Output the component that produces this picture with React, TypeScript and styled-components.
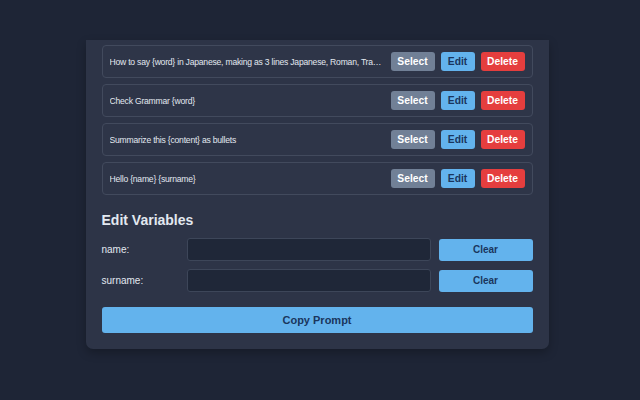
import React, { useState } from 'react';
import styled, { createGlobalStyle } from 'styled-components';

const GlobalStyle = createGlobalStyle`
  html, body {
    margin: 0;
    padding: 0;
    background: #1e2536;
    font-family: "Liberation Sans", Arial, sans-serif;
    color: #e2e8f0;
  }
`;

const Page = styled.div`
  width: 640px;
  height: 400px;
  overflow: hidden;
  display: flex;
  justify-content: center;
  align-items: flex-start;
  padding-top: 40px;
  box-sizing: border-box;
`;

const Card = styled.div`
  width: 463px;
  margin-left: -6px;
  box-sizing: border-box;
  background: #2d3447;
  border-radius: 0 0 7px 7px;
  box-shadow: 0 4px 10px rgba(0, 0, 0, 0.25);
  padding: 5px 16px 16px;
`;

const PromptList = styled.div`
  display: flex;
  flex-direction: column;
  gap: 6px;
`;

const PromptRow = styled.div`
  display: flex;
  align-items: center;
  gap: 6px;
  height: 33px;
  box-sizing: border-box;
  padding: 0 7px 0 7px;
  border: 1px solid #424a5d;
  border-radius: 4px;
  background: #2e3548;
`;

const PromptText = styled.span`
  flex: 1;
  min-width: 0;
  font-size: 8.6px;
  letter-spacing: -0.22px;
  color: #e2e8f0;
  white-space: nowrap;
  overflow: hidden;
  text-overflow: ellipsis;
`;

const tones = {
  gray: { bg: '#718096', fg: '#ffffff' },
  blue: { bg: '#63b3ed', fg: '#1a365d' },
  red: { bg: '#e53e3e', fg: '#ffffff' },
};

const SmallButton = styled.button<{ $tone: keyof typeof tones; $w: number }>`
  width: ${(p) => p.$w}px;
  height: 19px;
  border: none;
  border-radius: 3px;
  padding: 0;
  font-family: inherit;
  font-weight: bold;
  font-size: 10.3px;
  background: ${(p) => tones[p.$tone].bg};
  color: ${(p) => tones[p.$tone].fg};
  cursor: pointer;
  flex-shrink: 0;
`;

const Heading = styled.h2`
  margin: 17px 0 10px;
  font-size: 14px;
  font-weight: bold;
  color: #e2e8f0;
`;

const VarGrid = styled.div`
  display: grid;
  grid-template-columns: 77px 1fr 94px;
  column-gap: 8px;
  row-gap: 8px;
  align-items: center;
`;

const VarLabel = styled.label`
  font-size: 10px;
  color: #e2e8f0;
`;

const VarInput = styled.input`
  height: 23px;
  box-sizing: border-box;
  background: #1f2738;
  border: 1px solid #3d4659;
  border-radius: 3px;
  color: #e2e8f0;
  font-family: inherit;
  font-size: 10px;
  padding: 0 6px;
  outline: none;
`;

const ClearButton = styled.button`
  height: 22px;
  border: none;
  border-radius: 3px;
  background: #63b3ed;
  color: #1a365d;
  font-family: inherit;
  font-weight: bold;
  font-size: 10px;
  cursor: pointer;
`;

const CopyButton = styled.button`
  display: block;
  width: 100%;
  height: 26px;
  margin-top: 15px;
  border: none;
  border-radius: 3px;
  background: #63b3ed;
  color: #1a365d;
  font-family: inherit;
  font-weight: bold;
  font-size: 11px;
  cursor: pointer;
`;

const prompts = [
  'How to say {word} in Japanese, making as 3 lines Japanese, Roman, Translation',
  'Check Grammar {word}',
  'Summarize this {content} as bullets',
  'Hello {name} {surname}',
];

export default function App() {
  const [vars, setVars] = useState<Record<string, string>>({ name: '', surname: '' });

  return (
    <>
      <GlobalStyle />
      <Page>
        <Card>
          <PromptList>
            {prompts.map((text) => (
              <PromptRow key={text}>
                <PromptText>{text}</PromptText>
                <SmallButton $tone="gray" $w={44}>Select</SmallButton>
                <SmallButton $tone="blue" $w={34}>Edit</SmallButton>
                <SmallButton $tone="red" $w={44}>Delete</SmallButton>
              </PromptRow>
            ))}
          </PromptList>

          <Heading>Edit Variables</Heading>
          <VarGrid>
            {Object.keys(vars).map((key) => (
              <React.Fragment key={key}>
                <VarLabel htmlFor={key}>{key}:</VarLabel>
                <VarInput
                  id={key}
                  value={vars[key]}
                  onChange={(e) => setVars({ ...vars, [key]: e.target.value })}
                />
                <ClearButton onClick={() => setVars({ ...vars, [key]: '' })}>Clear</ClearButton>
              </React.Fragment>
            ))}
          </VarGrid>

          <CopyButton>Copy Prompt</CopyButton>
        </Card>
      </Page>
    </>
  );
}
